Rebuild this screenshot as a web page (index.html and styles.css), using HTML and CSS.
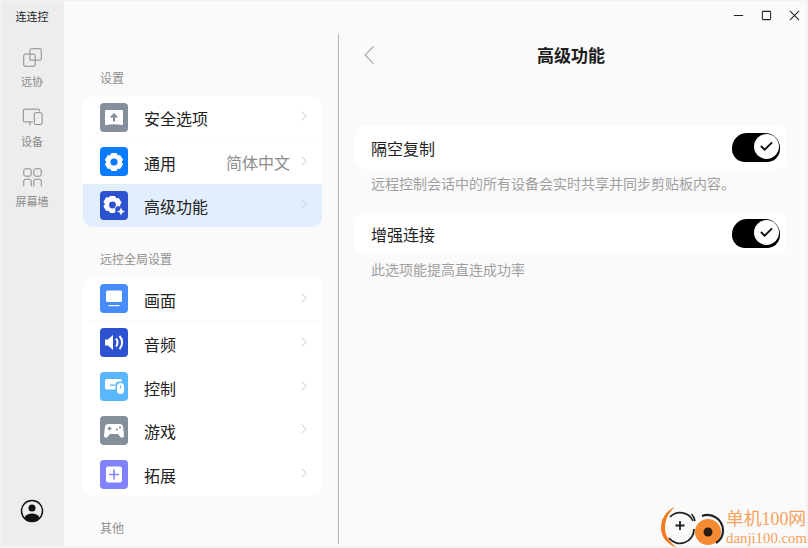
FILE: index.html
```html
<!DOCTYPE html>
<html lang="zh-CN">
<head>
<meta charset="utf-8">
<title>连连控</title>
<link rel="stylesheet" href="styles.css">
</head>
<body>
<div class="window">
  <aside class="rail">
    <div class="app-name">连连控</div>
    <nav class="rail-nav">
      <div class="rail-item">
        <svg class="rail-icon" viewBox="0 0 24 24"><path d="M9 7.500V3.500a1.500 1.500 0 0 1 1.500-1.500h10A1.500 1.500 0 0 1 22 3.500V13.500a1.500 1.500 0 0 1-1.500 1.500H15M3.500 8H13.500A1.500 1.500 0 0 1 15 9.500V20.500A1.500 1.500 0 0 1 13.500 22H3.500A1.500 1.500 0 0 1 2 20.500V9.500A1.500 1.500 0 0 1 3.500 8Z"/><path d="M9 8v7h6"/></svg>
        <span>远协</span>
      </div>
      <div class="rail-item">
        <svg class="rail-icon" viewBox="0 0 24 24"><path d="M12 17H2.500A1 1 0 0 1 1.500 16V3.500a1 1 0 0 1 1-1H19a1 1 0 0 1 1 1V5M9 17v4M15.500 6.500h6a1.500 1.500 0 0 1 1.500 1.500V18.500a1.500 1.500 0 0 1-1.500 1.500h-6a1.500 1.500 0 0 1-1.500-1.500V8a1.500 1.500 0 0 1 1.500-1.500Z"/></svg>
        <span>设备</span>
      </div>
      <div class="rail-item">
        <svg class="rail-icon" viewBox="0 0 24 24"><rect x="2" y="2" width="8.500" height="8.500" rx="2"/><rect x="13.500" y="2" width="8.500" height="8.500" rx="2"/><path d="M2 22v-6a2 2 0 0 1 2-2h4.500a2 2 0 0 1 2 2v6M13.500 22v-6a2 2 0 0 1 2-2H20a2 2 0 0 1 2 2v6"/></svg>
        <span>屏幕墙</span>
      </div>
    </nav>
    <svg class="avatar" viewBox="0 0 24 24"><circle cx="12" cy="12" r="10.500" class="avatar-ring"/><circle cx="12" cy="9" r="3.500"/><path d="M4.500 18.500C6 15.500 9 14.500 12 14.500s6 1 7.500 4C17.500 21.500 15 22.500 12 22.500S6.500 21.500 4.500 18.500Z"/></svg>
  </aside>

  <main class="main">
    <header class="titlebar">
      <svg class="win-btn" viewBox="0 0 12 12"><path d="M1 6h10"/></svg>
      <svg class="win-btn" viewBox="0 0 12 12"><rect x="1.500" y="1.500" width="9" height="9" rx="1"/></svg>
      <svg class="win-btn" viewBox="0 0 12 12"><path d="M1 1l10 10M11 1L1 11"/></svg>
    </header>
    <div class="content">
      <section class="settings">
        <div class="group-label first">设置</div>
        <div class="card">
          <div class="row">
            <svg class="icon" viewBox="0 0 28 29"><rect width="28" height="29" rx="4" fill="#848f9c"/><path d="M5 8a1 1 0 0 1 1-1h16a1 1 0 0 1 1 1V21.500a1 1 0 0 1-1 .600c-2.500-.600-5.500-.900-8-.900s-5.500 .300-8 .900a1 1 0 0 1-1-.600Z" fill="#fff"/><path d="M14 18.500v-6.500M11 14.500l3-3 3 3" fill="none" stroke="#848f9c" stroke-width="2"/></svg>
            <span class="row-title">安全选项</span>
            <svg class="chev" viewBox="0 0 6 10"><path d="M.7 .5l4.500 4.500-4.500 4.500"/></svg>
          </div>
          <div class="row">
            <svg class="icon" viewBox="0 0 28 29"><rect width="28" height="29" rx="4" fill="#0a7bff"/><path d="M11.500 6.500h5l1 2.500 2.600-.400 2.500 4.300-1.600 2.100 1.600 2.100-2.500 4.300-2.600-.400-1 2.500h-5l-1-2.500-2.600.400-2.500-4.300 1.600-2.100-1.600-2.100 2.500-4.300 2.600.400Z" fill="#fff" stroke="#fff" stroke-linejoin="round"/><circle cx="14" cy="15" r="3.600" fill="#0a7bff"/></svg>
            <span class="row-title">通用</span>
            <span class="row-value">简体中文</span>
            <svg class="chev" viewBox="0 0 6 10"><path d="M.7 .5l4.500 4.500-4.500 4.500"/></svg>
          </div>
          <div class="row active">
            <svg class="icon" viewBox="0 0 28 29"><rect width="28" height="29" rx="4" fill="#2d52cf"/><path d="M10 5.500h5l1 2.400 2.600-.400 2.500 4.300-1.600 2.100.5 1a4 4 0 0 0-5 5.500l-.5 1.100h-4.500l-1-2.400-2.600.400-2.500-4.300 1.600-2.100-1.600-2.100 2.500-4.300 2.600.400Z" fill="#fff" stroke="#fff" stroke-linejoin="round"/><circle cx="12.500" cy="14" r="3.400" fill="#2d52cf"/><path d="M21 16.500l1.200 2.800 2.800 1.200-2.800 1.200-1.200 2.800-1.200-2.800-2.800-1.200 2.800-1.200Z" fill="#fff"/></svg>
            <span class="row-title">高级功能</span>
            <svg class="chev" viewBox="0 0 6 10"><path d="M.7 .5l4.500 4.500-4.500 4.500"/></svg>
          </div>
        </div>

        <div class="group-label">远控全局设置</div>
        <div class="card">
          <div class="row">
            <svg class="icon" viewBox="0 0 28 29"><rect width="28" height="29" rx="4" fill="#488bfb"/><rect x="6" y="6.500" width="16" height="11.500" rx="1.500" fill="#fff"/><rect x="8.500" y="21" width="11" height="1.200" fill="#fff"/></svg>
            <span class="row-title">画面</span>
            <svg class="chev" viewBox="0 0 6 10"><path d="M.7 .5l4.500 4.500-4.500 4.500"/></svg>
          </div>
          <div class="row">
            <svg class="icon" viewBox="0 0 28 29"><rect width="28" height="29" rx="4" fill="#2d52cf"/><path d="M5 11.500h3l5-4.500v15l-5-4.500H5Z" fill="#fff"/><path d="M16 10.500c2 2 2 6 0 8M19.500 8c3.500 3.500 3.500 9.500 0 13" fill="none" stroke="#fff" stroke-width="2"/></svg>
            <span class="row-title">音频</span>
            <svg class="chev" viewBox="0 0 6 10"><path d="M.7 .5l4.500 4.500-4.500 4.500"/></svg>
          </div>
          <div class="row">
            <svg class="icon" viewBox="0 0 28 29"><rect width="28" height="29" rx="4" fill="#5ab7fb"/><path d="M7 7h13a2 2 0 0 1 2 2v.500h-3a3.500 3.500 0 0 0-3.500 3.500v4.500H7a2 2 0 0 1-2-2V9a2 2 0 0 1 2-2Z" fill="#fff"/><rect x="10" y="12.500" width="5" height="1.300" fill="#5ab7fb"/><rect x="17" y="11" width="7" height="11" rx="3.500" fill="#fff"/><rect x="20" y="13.500" width="1" height="3" fill="#5ab7fb"/></svg>
            <span class="row-title">控制</span>
            <svg class="chev" viewBox="0 0 6 10"><path d="M.7 .5l4.500 4.500-4.500 4.500"/></svg>
          </div>
          <div class="row">
            <svg class="icon" viewBox="0 0 28 29"><rect width="28" height="29" rx="4" fill="#848f9c"/><path d="M8 8h12a3 3 0 0 1 3 2.500l1 9a2 2 0 0 1-3.500 1.500l-2.500-3h-8L7.500 21A2 2 0 0 1 4 19.500l1-9A3 3 0 0 1 8 8Z" fill="#fff"/><path d="M9.500 10.500v4M7.500 12.500h4" stroke="#848f9c" stroke-width="1.400"/><circle cx="17" cy="13.500" r="1.100" fill="#848f9c"/><circle cx="20" cy="11.500" r="1.100" fill="#848f9c"/></svg>
            <span class="row-title">游戏</span>
            <svg class="chev" viewBox="0 0 6 10"><path d="M.7 .5l4.500 4.500-4.500 4.500"/></svg>
          </div>
          <div class="row">
            <svg class="icon" viewBox="0 0 28 29"><rect width="28" height="29" rx="4" fill="#7f82fb"/><rect x="6" y="6.500" width="16" height="16" rx="2" fill="#fff"/><path d="M14 9.500v10M9 14.500h10" stroke="#7f82fb" stroke-width="1.600"/></svg>
            <span class="row-title">拓展</span>
            <svg class="chev" viewBox="0 0 6 10"><path d="M.7 .5l4.500 4.500-4.500 4.500"/></svg>
          </div>
        </div>

        <div class="group-label last">其他</div>
      </section>

      <section class="detail">
        <header class="detail-head">
          <svg class="back" viewBox="0 0 10 18"><path d="M9.500 .500L1 9l8.500 8.500"/></svg>
          <h1 class="detail-title">高级功能</h1>
        </header>
        <div class="option">
          <span class="option-title">隔空复制</span>
          <span class="toggle"><span class="knob"><svg viewBox="0 0 14 10"><path d="M1 5l4 4 8-8"/></svg></span></span>
        </div>
        <p class="option-desc">远程控制会话中的所有设备会实时共享并同步剪贴板内容。</p>
        <div class="option">
          <span class="option-title">增强连接</span>
          <span class="toggle"><span class="knob"><svg viewBox="0 0 14 10"><path d="M1 5l4 4 8-8"/></svg></span></span>
        </div>
        <p class="option-desc">此选项能提高直连成功率</p>
      </section>
    </div>
  </main>
</div>

<div class="watermark">
  <svg class="wm-logo" viewBox="0 0 64 44">
    <path d="M14 3C6 6 0 14 0 24c0 9 6 16 16 20-6-5-12-11-12-20C4 15 8 8 14 3Z" fill="#f47a1f"/>
    <path d="M9 13a14 14 0 0 1 23 4M33 25a14 14 0 0 1-25 9" fill="none" stroke="#222" stroke-width="1.800"/>
    <path d="M19 17v9M14.500 21.500h9" stroke="#222" stroke-width="1.800"/>
    <path d="M30.500 10c2 2 3 4 3.500 7" fill="none" stroke="#222" stroke-width="1.600"/>
    <circle cx="47" cy="28" r="13" fill="#f58a33"/>
    <path d="M41 12a15.500 15.500 0 0 1 21 14 15 15 0 0 1-7 13" fill="none" stroke="#222" stroke-width="2.200"/>
    <circle cx="47" cy="28" r="4.500" fill="#2a1d14"/>
  </svg>
  <div class="wm-text">
    <div class="wm-cn">单机100网</div>
    <div class="wm-en">danji100.com</div>
  </div>
</div>
</body>
</html>
```
FILE: styles.css
```css
* { box-sizing: border-box; }
html, body { margin: 0; height: 100%; }
body {
  position: relative;
  overflow: hidden;
  background: #f3f3f5;
  padding: 1px 2px 2px 1px;
  font-family: "Noto Sans CJK SC", "Noto Sans", sans-serif;
  color: #1c1c1c;
}
.window { display: flex; height: 100%; background: #fafafa; }

/* left rail */
.rail {
  width: 63px;
  flex: none;
  background: #ededed;
  display: flex;
  flex-direction: column;
  align-items: center;
  padding-right: 1px;
}
.app-name { margin-top: 7px; height: 16px; line-height: 16px; font-size: 11px; color: #222; }
.rail-nav { display: flex; flex-direction: column; gap: 18px; margin-top: 23px; }
.rail-item {
  display: flex;
  flex-direction: column;
  align-items: center;
  gap: 5px;
  height: 42px;
  font-size: 11px;
  line-height: 16px;
  color: #8a8a8a;
}
.rail-icon { width: 23px; height: 23px; fill: none; stroke: #7a7a7a; stroke-width: 1; }
.avatar { width: 24px; height: 24px; margin-top: auto; margin-bottom: 23px; fill: #111; }
.avatar-ring { fill: none; stroke: #111; stroke-width: 1.500; }

/* main */
.main { flex: 1; min-width: 0; display: flex; flex-direction: column; }
.titlebar {
  height: 33px;
  flex: none;
  display: flex;
  justify-content: flex-end;
  align-items: flex-start;
  gap: 17px;
  padding: 9px 6px 0 0;
}
.win-btn { width: 11px; height: 11px; fill: none; stroke: #222; stroke-width: 1.100; }
.content { flex: 1; min-height: 0; display: flex; padding-bottom: 2px; }

/* settings column */
.settings {
  width: 275px;
  flex: none;
  padding: 0 16px 0 19px;
  border-right: 1px solid #b4b4b8;
  overflow: hidden;
}
.group-label { padding-left: 17px; font-size: 12px; line-height: 18px; color: #8f8f8f; margin: 23px 0 9px; }
.group-label.first { margin-top: 35px; }
.group-label.last { margin-top: 23px; margin-bottom: 0; }
.card { background: #fff; border-radius: 10px; overflow: hidden; }
.row {
  height: 43.75px;
  display: flex;
  align-items: center;
  padding: 0 15px 0 17px;
}
.row:first-child { border-bottom: 1px solid #fafafa; }
.row.active { background: #e1eefe; }
.icon { width: 28px; height: 29px; flex: none; }
.row-title { margin: 2px 0 0 16px; font-size: 16px; line-height: 24px; color: #222; }
.row-value { margin-left: auto; font-size: 16px; line-height: 24px; color: #8d8d8d; }
.chev { width: 6px; height: 10px; margin-left: auto; margin-top: -2px; flex: none; fill: none; stroke: #c8c8c8; stroke-width: 1; }
.row-value + .chev { margin-left: 11px; }

/* detail column */
.detail { flex: 1; min-width: 0; padding: 0 19px 0 16px; }
.detail-head { position: relative; height: 44px; display: flex; align-items: center; justify-content: center; margin-bottom: 48px; }
.back { position: absolute; left: 9px; top: 12px; width: 10px; height: 18px; fill: none; stroke: #a8a8a8; stroke-width: 1.100; }
.detail-title { margin: -2px 0 0; font-size: 17px; line-height: 24px; font-weight: 700; color: #1c1c1c; }
.option {
  height: 43px;
  background: #fff;
  border-radius: 10px;
  display: flex;
  align-items: center;
  justify-content: space-between;
  padding: 0 7px 0 16px;
}
.option-title { font-size: 16px; line-height: 24px; color: #222; }
.toggle {
  width: 48px;
  height: 29px;
  margin-top: -1px;
  background: #000;
  border-radius: 15px 15px 13px 13px;
  display: flex;
  align-items: flex-start;
  justify-content: flex-end;
  padding: 1px 1px 0 0;
}
.knob { width: 25px; height: 25px; border-radius: 50%; background: #fff; display: flex; align-items: center; justify-content: center; }
.knob svg { width: 13px; height: 10px; fill: none; stroke: #111; stroke-width: 2; }
.option-desc { margin: 4px 0 19px 16px; font-size: 14px; line-height: 20px; color: #a0a0a0; }

/* watermark overlay */
.watermark {
  position: absolute;
  right: 1px;
  top: 504px;
  display: flex;
  align-items: flex-start;
  gap: 1px;
}
.wm-logo { width: 64px; height: 44px; }
.wm-text { color: #f7a15c; font-family: "Liberation Serif", "Noto Sans CJK SC", serif; padding-top: 5px; }
.wm-cn { font-size: 17.800px; line-height: 20px; font-family: "Liberation Serif", "Noto Sans CJK SC", sans-serif; }
.wm-en { font-size: 14.800px; line-height: 16px; margin-top: 1px; }
```
